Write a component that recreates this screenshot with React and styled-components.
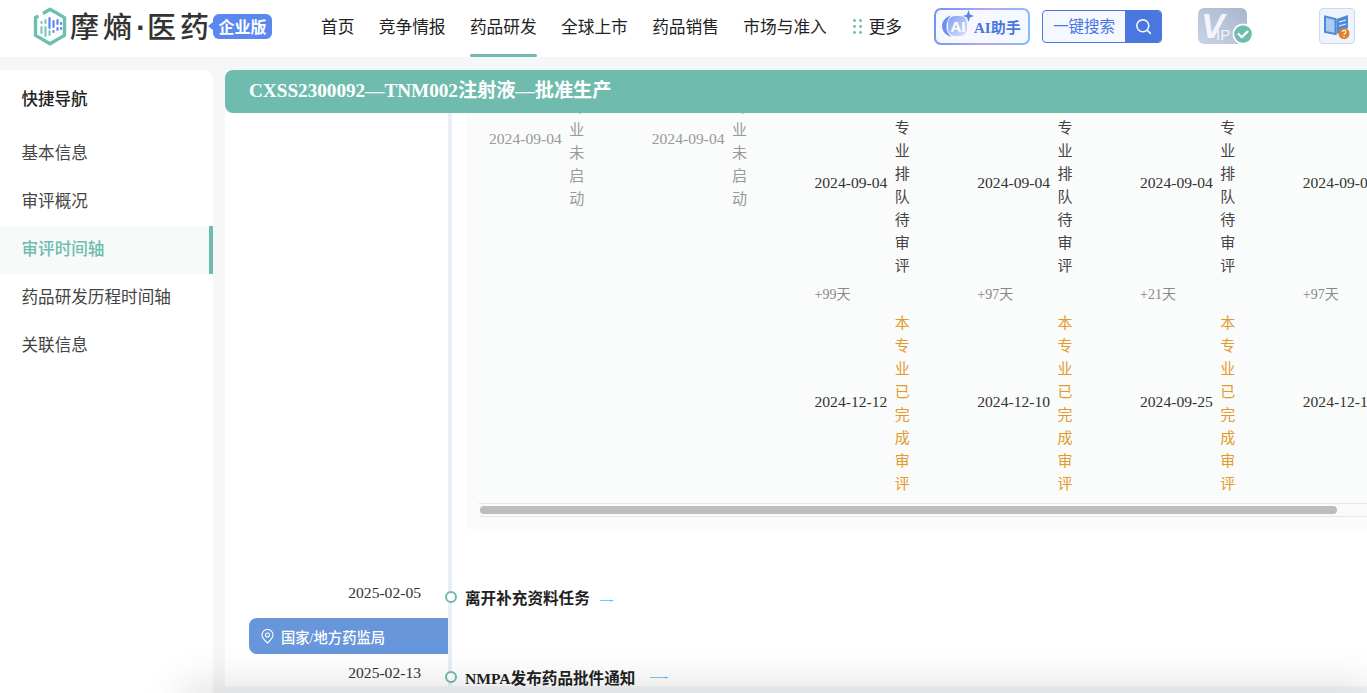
import React from "react";
import styled, { createGlobalStyle } from "styled-components";

const TEAL = "#6fbcae";
const BLUE = "#4a76e0";

const Global = createGlobalStyle`
  html, body { margin: 0; padding: 0; height: 693px; overflow: hidden; background: #f5f6f8; }
  body { font-family: "Liberation Serif", "Noto Sans CJK SC", serif; color: #333; }
  * { box-sizing: border-box; }
`;

const Page = styled.div`
  position: relative;
  height: 693px;
  width: 1367px;
  overflow: hidden;
  display: flex;
  flex-direction: column;
  background: #f5f6f8;
`;

const Header = styled.header`
  height: 57px;
  flex: none;
  background: #fff;
  display: flex;
  align-items: flex-start;
  padding-left: 33px;
`;

const Logo = styled.div`
  width: 288px;
  height: 57px;
  flex: none;
  display: flex;
  align-items: center;
  padding-bottom: 5px;
`;

const LogoName = styled.span`
  font-family: "Noto Sans CJK SC", sans-serif;
  font-size: 29px;
  font-weight: 500;
  color: #333;
  margin-left: 3px;
  line-height: 38px;
  width: 141px;
  letter-spacing: 4px;
  white-space: nowrap;
`;

const LogoDot = styled.span`
  font-family: "Liberation Sans", sans-serif;
  font-weight: 700;
  letter-spacing: 0;
  display: inline-block;
  width: 12px;
  margin-left: -1px;
  text-align: center;
`;

const Edition = styled.span`
  position: relative;
  margin-left: 2px;
  width: 59px;
  height: 25px;
  border-radius: 6px;
  background: #5b87ef;
  color: #fff;
  font-family: "Noto Sans CJK SC", sans-serif;
  font-weight: 700;
  font-size: 16px;
  line-height: 25px;
  text-align: center;
  &::before {
    content: "";
    position: absolute;
    left: -5px;
    top: 8px;
    border-style: solid;
    border-width: 4.5px 5px 4.5px 0;
    border-color: transparent #5b87ef transparent transparent;
  }
`;

const Nav = styled.nav`
  display: flex;
  gap: 24.4px;
  flex: none;
  height: 57px;
`;

const NavItem = styled.a`
  position: relative;
  display: flex;
  align-items: center;
  gap: 7px;
  height: 54px;
  padding-bottom: 2px;
  margin-left: ${(p) => (p.$more ? 1.5 : 0)}px;
  font-size: 16.7px;
  color: #222;
  white-space: nowrap;
  ${(p) =>
    p.$active &&
    `&::after {
      content: "";
      position: absolute;
      left: 0; right: 0; top: 54px;
      height: 3px;
      border-radius: 2px;
      background: ${TEAL};
    }`}
`;

const Tools = styled.div`
  display: flex;
  align-items: flex-start;
  padding-left: 32px;
  flex: none;
`;

const AiButton = styled.button`
  width: 96px;
  height: 37px;
  margin-top: 8px;
  padding: 0 0 0 3px;
  border: 2px solid transparent;
  border-radius: 7px;
  background: linear-gradient(#f5f8ff, #f5f8ff) padding-box,
    linear-gradient(100deg, #6f93ee, #b9a6f2 55%, #7cc0fb) border-box;
  display: flex;
  align-items: center;
  color: ${BLUE};
  font-family: inherit;
  font-weight: 700;
  font-size: 15px;
  white-space: nowrap;
`;

const SearchBox = styled.div`
  margin: 10px 0 0 12px;
  width: 120px;
  height: 33px;
  border: 1px solid ${BLUE};
  border-radius: 4px;
  background: #f5f8ff;
  display: flex;
  overflow: hidden;
`;

const SearchLabel = styled.span`
  flex: 1;
  text-align: center;
  line-height: 31px;
  font-size: 15.5px;
  color: ${BLUE};
`;

const SearchButton = styled.span`
  width: 36px;
  background: ${BLUE};
  display: flex;
  align-items: center;
  justify-content: center;
`;

const VipIcon = styled.svg`
  margin: 7px 0 0 36px;
  flex: none;
`;

const HelpIcon = styled.div`
  margin: 8px 0 0 65px;
  width: 36px;
  height: 36px;
  border: 1px solid #c9d9f2;
  border-radius: 4px;
  background: #eef3fc;
  display: flex;
  align-items: center;
  justify-content: center;
`;

const Body = styled.div`
  flex: 1;
  min-height: 0;
  padding-top: 13px;
  display: grid;
  grid-template-columns: 213px 1fr;
  column-gap: 12px;
`;

const Sidebar = styled.aside`
  background: #fff;
  border-top-right-radius: 8px;
`;

const SideTitle = styled.div`
  height: 60px;
  line-height: 59px;
  padding-left: 21.5px;
  font-size: 16.5px;
  font-weight: 500;
  color: #222;
`;

const SideItem = styled.a`
  display: block;
  height: 48px;
  line-height: 48px;
  padding-left: 21.5px;
  font-size: 16.6px;
  color: ${(p) => (p.$active ? TEAL : "#444")};
  font-weight: ${(p) => (p.$active ? 500 : 400)};
  background: ${(p) => (p.$active ? "#f6faf9" : "transparent")};
  border-right: 4px solid ${(p) => (p.$active ? TEAL : "transparent")};
`;

const Main = styled.main`
  height: 616px;
  display: flex;
  flex-direction: column;
  min-width: 0;
  background: #fff;
`;

const TitleBar = styled.h1`
  margin: 0;
  height: 43px;
  flex: none;
  padding-left: 24px;
  background: ${TEAL};
  border-radius: 8px 0 0 8px;
  color: #fff;
  font-size: 19.2px;
  font-weight: 700;
  line-height: 41px;
  white-space: nowrap;
`;

const Timeline = styled.div`
  flex: 1;
  min-height: 0;
  overflow: hidden;
`;

const Row = styled.div`
  display: grid;
  grid-template-columns: 223px 1fr;
  height: ${(p) => p.$h}px;
`;

const LeftCell = styled.div`
  padding-right: 27px;
  text-align: right;
`;

const RightCell = styled.div`
  position: relative;
  min-width: 0;
  border-left: 4px solid #e9eff5;
  padding-left: ${(p) => p.$pad || 0}px;
`;

const Panel = styled.section`
  width: 900px;
  height: 416px;
  background: #fafbfb;
  padding-left: 12px;
  overflow: hidden;
`;

const Columns = styled.div`
  display: flex;
  margin-top: -40.5px;
  height: 430.5px;
`;

const Column = styled.div`
  width: 162.75px;
  flex: none;
  padding: ${(p) => (p.$lead ? 21 : 0)}px 0 0 10px;
`;

const Stage = styled.div`
  display: flex;
  align-items: center;
  gap: 7px;
`;

const StageDate = styled.span`
  font-size: 15.6px;
  line-height: 20px;
  margin-top: ${(p) => -p.$lift}px;
  white-space: nowrap;
  color: ${(p) => (p.$muted ? "#999" : "#333")};
`;

const StageText = styled.span`
  width: 16px;
  font-size: 15px;
  line-height: 23px;
  text-align: center;
  word-break: break-all;
  color: ${(p) => p.$color};
`;

const Delay = styled.div`
  height: 34px;
  line-height: 33px;
  font-size: 14px;
  color: #888;
`;

const ScrollTrack = styled.div`
  height: 14px;
  border-top: 1px solid #e6e6e6;
  border-bottom: 1px solid #e6e6e6;
  background: #fafafa;
  padding: 2px 0 0 1px;
`;

const ScrollThumb = styled.div`
  width: 857px;
  height: 8px;
  border-radius: 4px;
  background: #bdbdbd;
`;

const EventDate = styled.div`
  font-size: 15.6px;
  line-height: 24px;
  color: #333;
`;

const EventTitle = styled.div`
  display: flex;
  align-items: center;
  margin-top: 4px;
  height: 24px;
  font-size: 15.6px;
  font-weight: 700;
  color: #222;
  white-space: nowrap;
`;

const Dot = styled.span`
  position: absolute;
  left: -7px;
  top: 10px;
  width: 12px;
  height: 12px;
  border-radius: 50%;
  border: 2.4px solid ${TEAL};
  background: #fff;
`;

const Tail = styled.svg`
  margin-left: ${(p) => p.$gap}px;
  margin-top: ${(p) => p.$top}px;
  flex: none;
`;

const Agency = styled.div`
  margin-left: 24px;
  width: 199px;
  height: 36px;
  border-radius: 8px 0 0 8px;
  background: #6796db;
  color: #fff;
  display: flex;
  align-items: center;
  gap: 7px;
  padding-left: 12px;
  font-size: 14.3px;
  font-weight: 500;
  white-space: nowrap;
`;

const BottomShadow = styled.div`
  position: absolute;
  left: 190px;
  right: 0;
  top: 693px;
  height: 20px;
  box-shadow: 0 0 40px 8px rgba(0, 0, 0, 0.13);
`;

const LogoMark = () => (
  <svg width="34" height="39" viewBox="0 0 34 39" fill="none">
    <path d="M10 6.5 17 2.2l14.5 8.4v17.8L17 36.8 2.5 28.4V10.6l3-1.7" stroke="#6cc0b2" strokeWidth="3.4" strokeLinejoin="round" />
    <g strokeWidth="2.2" strokeLinecap="round">
      <path d="M8.5 15v1M8.5 20v6" stroke="#7fc9bb" />
      <path d="M12.5 13v3M12.5 20v9" stroke="#7fc9bb" />
      <path d="M16.5 11v10" stroke="#5b87ef" />
      <path d="M16.5 24v4" stroke="#7fc9bb" />
      <path d="M20.5 14v6M20.5 24v1" stroke="#5b87ef" />
      <path d="M24.5 13v4M24.5 21v2" stroke="#5b87ef" />
      <path d="M28 16v1M28 21v1" stroke="#5b87ef" />
    </g>
  </svg>
);

const MoreDots = () => (
  <svg width="9" height="15" viewBox="0 0 9 15" fill={TEAL}>
    {[1.5, 7.5, 13.5].map((y) =>
      [1.5, 7.5].map((x) => <circle key={`${x}-${y}`} cx={x} cy={y} r="1.4" />)
    )}
  </svg>
);

const AiMark = () => (
  <svg width="35" height="33" viewBox="0 0 35 33" fill="none">
    <defs>
      <linearGradient id="aig" x1="0" y1="0" x2="1" y2="1">
        <stop offset="0" stopColor="#7f9ef0" />
        <stop offset="1" stopColor="#dbe4fb" />
      </linearGradient>
    </defs>
    <path d="M12 5.5C6.5 7 3 11 3 16s3.5 9.5 9.5 11C9 24 7.5 20.5 7.5 16.5S9 8.5 12 5.5Z" fill="#6f8fee" />
    <rect x="9" y="6" width="19" height="20" rx="7" fill="url(#aig)" />
    <text x="11.5" y="22" fontFamily="Liberation Sans, sans-serif" fontSize="15" fontWeight="700" fill="#fff">AI</text>
    <path d="M29.5 0 31 4.5 35 6l-4 1.5-1.5 4.5L28 7.5 24 6l4-1.5Z" fill="#5b83ea" />
  </svg>
);

const Vip = () => (
  <VipIcon width="56" height="40" viewBox="0 0 56 40" fill="none">
    <defs>
      <linearGradient id="vipg" x1="0" y1="1" x2="1" y2="0">
        <stop offset="0" stopColor="#c9d3e6" />
        <stop offset="1" stopColor="#aab5cf" />
      </linearGradient>
    </defs>
    <rect x="0" y="1" width="49" height="36" rx="6" fill="url(#vipg)" />
    <text x="3" y="31" fontFamily="Liberation Sans, sans-serif" fontSize="35" fontWeight="700" fontStyle="italic" fill="#f3f5fa">V</text>
    <text x="18" y="33" fontFamily="Liberation Sans, sans-serif" fontSize="15" fill="#f3f5fa">IP</text>
    <circle cx="45" cy="27" r="10.5" fill="#fff" />
    <circle cx="45" cy="27" r="8.8" fill={TEAL} />
    <path d="m40.5 27 3.2 3.2 5.8-5.6" stroke="#fff" strokeWidth="2.2" strokeLinecap="round" strokeLinejoin="round" />
  </VipIcon>
);

const HelpBook = () => (
  <svg width="26" height="28" viewBox="0 0 26 28" fill="none">
    <path d="M1 4.5 11.5 7v15L1 20Z" stroke="#4f8ad8" strokeWidth="2" fill="#a9ccef" />
    <path d="M12.5 7 24 3v13l-6 4-5.5 2Z" fill="#4f8ad8" />
    <path d="m15 10 7-2M15 14l7-2" stroke="#eaf2fc" strokeWidth="1.3" />
    <circle cx="20" cy="21.5" r="5.5" fill="#e07f2e" />
    <path d="M18.3 20a1.8 1.8 0 1 1 2.6 1.6c-.6.3-.9.6-.9 1.2" stroke="#fff" strokeWidth="1.1" />
    <circle cx="20" cy="24.5" r=".7" fill="#fff" />
  </svg>
);

const Pin = () => (
  <svg width="13" height="15" viewBox="0 0 13 15" fill="none" stroke="#fff" strokeWidth="1.1">
    <path d="M6.5 14C3 10.8 1 8.6 1 6a5.5 5.5 0 0 1 11 0c0 2.600-2 4.800-5.500 8Z" />
    <circle cx="6.5" cy="6" r="2" />
  </svg>
);

const Arrow = ({ width, gap, top }) => (
  <Tail $gap={gap} $top={top} width={width} height="3" viewBox={`0 0 ${width} 3`} fill="none">
    <path d={`M0 1.5H${width - 1}`} stroke="#7cc8f5" strokeWidth="1" />
    <path d={`M${width - 4} 0.5 ${width} 1.8 ${width - 4} 2.5Z`} fill="#5cbcf2" />
  </Tail>
);

const navItems = ["首页", "竞争情报", "药品研发", "全球上市", "药品销售", "市场与准入"];
const sideItems = ["基本信息", "审评概况", "审评时间轴", "药品研发历程时间轴", "关联信息"];

const columns = [
  { pending: "2024-09-04" },
  { pending: "2024-09-04" },
  { start: "2024-09-04", delay: "+99天", end: "2024-12-12" },
  { start: "2024-09-04", delay: "+97天", end: "2024-12-10" },
  { start: "2024-09-04", delay: "+21天", end: "2024-09-25" },
  { start: "2024-09-04", delay: "+97天", end: "2024-12-10" },
];

export default function App() {
  return (
    <Page>
      <Global />
      <Header>
        <Logo>
          <LogoMark />
          <LogoName>摩熵<LogoDot>·</LogoDot>医药</LogoName>
          <Edition>企业版</Edition>
        </Logo>
        <Nav>
          {navItems.map((n) => (
            <NavItem key={n} $active={n === "药品研发"}>{n}</NavItem>
          ))}
          <NavItem $more>
            <MoreDots />
            更多
          </NavItem>
        </Nav>
        <Tools>
          <AiButton>
            <AiMark />
            AI助手
          </AiButton>
          <SearchBox>
            <SearchLabel>一键搜索</SearchLabel>
            <SearchButton>
              <svg width="17" height="17" viewBox="0 0 17 17" fill="none" stroke="#fff" strokeWidth="1.5" strokeLinecap="round">
                <circle cx="7.8" cy="7.8" r="6" />
                <path d="m12.4 12.4 3 3" />
              </svg>
            </SearchButton>
          </SearchBox>
          <Vip />
          <HelpIcon>
            <HelpBook />
          </HelpIcon>
        </Tools>
      </Header>
      <Body>
        <Sidebar>
          <SideTitle>快捷导航</SideTitle>
          {sideItems.map((s) => (
            <SideItem key={s} $active={s === "审评时间轴"}>{s}</SideItem>
          ))}
        </Sidebar>
        <Main>
          <TitleBar>CXSS2300092—TNM002注射液—批准生产</TitleBar>
          <Timeline>
            <Row $h={468}>
              <LeftCell />
              <RightCell $pad={15}>
                <Panel>
                  <Columns>
                    {columns.map((c, i) =>
                      c.pending ? (
                        <Column key={i}>
                          <Stage>
                            <StageDate $muted $lift={5}>{c.pending}</StageDate>
                            <StageText $color="#999">本专业未启动</StageText>
                          </Stage>
                        </Column>
                      ) : (
                        <Column key={i} $lead>
                          <Stage>
                            <StageDate $lift={5}>{c.start}</StageDate>
                            <StageText $color="#444">本专业排队待审评</StageText>
                          </Stage>
                          <Delay>{c.delay}</Delay>
                          <Stage>
                            <StageDate $lift={3}>{c.end}</StageDate>
                            <StageText $color="#e39a2b">本专业已完成审评</StageText>
                          </Stage>
                        </Column>
                      )
                    )}
                  </Columns>
                  <ScrollTrack>
                    <ScrollThumb />
                  </ScrollTrack>
                </Panel>
              </RightCell>
            </Row>
            <Row $h={37}>
              <LeftCell>
                <EventDate>2025-02-05</EventDate>
              </LeftCell>
              <RightCell $pad={13}>
                <Dot />
                <EventTitle>
                  离开补充资料任务
                  <Arrow width={14} gap={10} top={6} />
                </EventTitle>
              </RightCell>
            </Row>
            <Row $h={43}>
              <Agency>
                <Pin />
                国家/地方药监局
              </Agency>
              <RightCell />
            </Row>
            <Row $h={40}>
              <LeftCell>
                <EventDate>2025-02-13</EventDate>
              </LeftCell>
              <RightCell $pad={13}>
                <Dot />
                <EventTitle>
                  NMPA发布药品批件通知
                  <Arrow width={19} gap={15} top={0} />
                </EventTitle>
              </RightCell>
            </Row>
          </Timeline>
        </Main>
      </Body>
      <BottomShadow />
    </Page>
  );
}
